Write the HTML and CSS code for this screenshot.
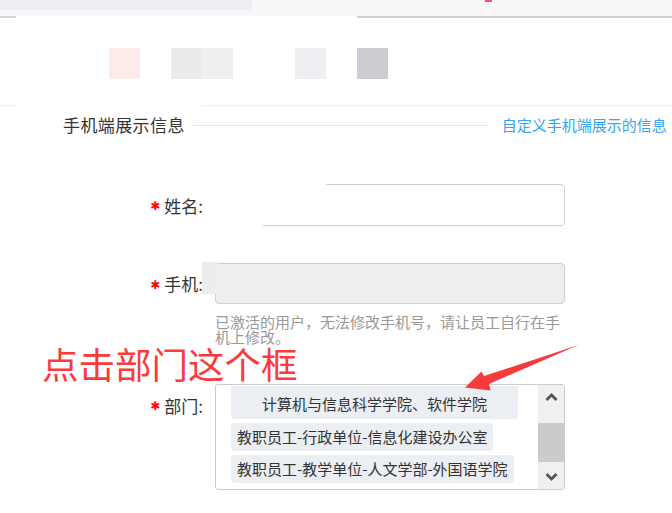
FILE: index.html
```html
<!DOCTYPE html>
<html lang="zh-CN">
<head>
<meta charset="utf-8">
<title>手机端展示信息</title>
<link rel="stylesheet" href="styles.css">
</head>
<body>
<div class="page">
  <div class="topbar"><div class="tab"></div><div class="tick"></div></div>
  <div class="topline"></div>
  <div class="hero">
    <span class="sq sq-pink"></span>
    <span class="sq sq-gray1"></span>
    <span class="sq sq-gray2"></span>
    <span class="sq sq-blue"></span>
    <span class="sq sq-dark"></span>
  </div>
  <div class="hero-line"></div>

  <div class="section-head">
    <span class="title">手机端展示信息</span>
    <span class="rule"></span>
    <a class="link">自定义手机端展示的信息</a>
  </div>

  <div class="form">
    <div class="row row-name">
      <label class="label label-name"><span class="req">✱</span>姓名:</label>
      <div class="field"><div class="input"></div></div>
    </div>

    <div class="row row-phone">
      <label class="label label-phone"><span class="req">✱</span>手机:</label>
      <div class="field">
        <div class="input input-disabled"></div>
        <p class="help">已激活的用户，无法修改手机号，请让员工自行在手机上修改。</p>
      </div>
    </div>

    <div class="note">点击部门这个框</div>

    <div class="row row-dept">
      <label class="label label-dept"><span class="req">✱</span>部门:</label>
      <div class="field">
        <div class="select">
          <div class="tags">
            <span class="tag tag-first">计算机与信息科学学院、软件学院</span>
            <span class="tag">教职员工-行政单位-信息化建设办公室</span>
            <span class="tag">教职员工-教学单位-人文学部-外国语学院</span>
          </div>
          <div class="scrollbar">
            <div class="sb-btn sb-up"><svg width="13" height="9" viewBox="0 0 13 9"><polyline points="1.5,7 6.5,2 11.5,7" fill="none" stroke="#555" stroke-width="2.8"/></svg></div>
            <div class="sb-track"><div class="sb-thumb"></div></div>
            <div class="sb-btn sb-down"><svg width="13" height="9" viewBox="0 0 13 9"><polyline points="1.5,2 6.5,7 11.5,2" fill="none" stroke="#555" stroke-width="2.8"/></svg></div>
          </div>
        </div>
      </div>
    </div>
  </div>

  <div class="mask mask-a"></div>
  <div class="mask mask-b"></div>
  <div class="mask-gray"></div>

  <svg class="arrow" width="672" height="513" viewBox="0 0 672 513">
    <polygon points="465,387.5 481.5,371.5 484,376 578.5,345 489,384 490.5,390.5" fill="#f53c3c"/>
  </svg>
</div>
</body>
</html>
```

FILE: styles.css
```css
* { box-sizing: border-box; }
html, body { margin: 0; padding: 0; background: #fff; }
body {
  font-family: "Noto Sans CJK SC", "Noto Sans", sans-serif;
  color: #333;
  width: 672px;
  height: 513px;
  overflow: hidden;
}
.page { position: relative; width: 672px; height: 513px; }

.topbar { height: 16px; background: #f8f8fa; position: relative; }
.tab { width: 252px; height: 10px; background: #efeef3; border-bottom-right-radius: 4px; }
.tick { position: absolute; left: 485px; top: 0; width: 7px; height: 2px; background: #f2506f; }
.topline {
  height: 2px;
  background: linear-gradient(to right, #d4d4d8 0, #d4d4d8 16px, #fff 16px, #fff 357px, #cfcfd2 357px);
}

.hero { height: 87px; padding-top: 30px; padding-left: 109px; display: flex; }
.sq { width: 31px; height: 31px; display: block; }
.sq-pink { background: #fcece9; }
.sq-gray1 { background: #ebebeb; margin-left: 31px; }
.sq-gray2 { background: #efefef; }
.sq-blue { background: #efeff3; margin-left: 62px; }
.sq-dark { background: #cccbd0; margin-left: 31px; }
.hero-line {
  height: 1px;
  background: linear-gradient(to right, #eeeeee 0, #eeeeee 16px, #fff 16px, #fff 201px, #ededed 201px);
}

.section-head { display: flex; align-items: center; height: 24px; margin-top: 7px; padding-left: 63px; }
.title { font-size: 17px; line-height: 24px; color: #333; letter-spacing: 0.4px; }
.rule { width: 296px; height: 1px; background: #e5e5e5; margin-left: 8px; }
.link { margin-left: 13px; font-size: 15px; color: #36a6f2; line-height: 24px; }

.form { display: flex; flex-direction: column; }
.row { display: flex; align-items: flex-start; }
.label {
  width: 203px;
  display: flex;
  justify-content: flex-end;
  align-items: center;
  font-size: 17px;
  color: #333;
}
.req { color: #f00; font-family: "DejaVu Sans", sans-serif; font-size: 12px; margin-right: 4px; margin-top: 2px; }
.field { margin-left: 12px; width: 350px; }

.row-name { margin-top: 47px; }
.label-name { height: 42px; }
.input { height: 42px; border: 1px solid #cfcfcf; border-radius: 4px; background: #fff; }

.row-phone { margin-top: 37px; }
.label-phone { height: 41px; }
.input-disabled { height: 41px; background: #eeeeee; }
.help { margin: 10px 0 0 0; font-size: 15px; line-height: 15px; color: #999; }

.note { margin-left: 42px; font-size: 36.5px; line-height: 40px; color: #fa3b3b; height: 40px; margin-top: 0; }

.row-dept { margin-top: 0; }
.label-dept { height: 24px; margin-top: 9px; }
.select {
  height: 106px;
  border: 1px solid #cccccc;
  border-radius: 3px;
  display: flex;
  overflow: hidden;
}
.tags { flex: 1; padding: 1px 0 0 15px; display: flex; flex-direction: column; align-items: flex-start; gap: 4px; }
.tag {
  display: block;
  background: #ebeef3;
  border-radius: 3px;
  font-size: 15px;
  line-height: 28px;
  height: 28px;
  padding: 0 6px;
  color: #333;
  white-space: nowrap;
}
.tag-first { height: 33px; line-height: 28px; padding: 4px 31px 0 31px; border-top-left-radius: 0; border-top-right-radius: 0; }
.scrollbar { width: 26px; background: #f0f0f0; display: flex; flex-direction: column; }
.sb-btn { height: 26px; display: flex; align-items: center; justify-content: center; }
.sb-up { height: 25px; }
.sb-track { flex: 1; padding-top: 13px; }
.sb-thumb { height: 39px; background: #cbcbcb; }

.mask { position: absolute; background: #fff; }
.mask-a { left: 204px; top: 181px; width: 122px; height: 22px; }
.mask-b { left: 204px; top: 181px; width: 59px; height: 47px; }
.mask-gray { position: absolute; left: 202px; top: 262px; width: 15px; height: 32px; background: #ededed; }

.arrow { position: absolute; left: 0; top: 0; pointer-events: none; }
```
